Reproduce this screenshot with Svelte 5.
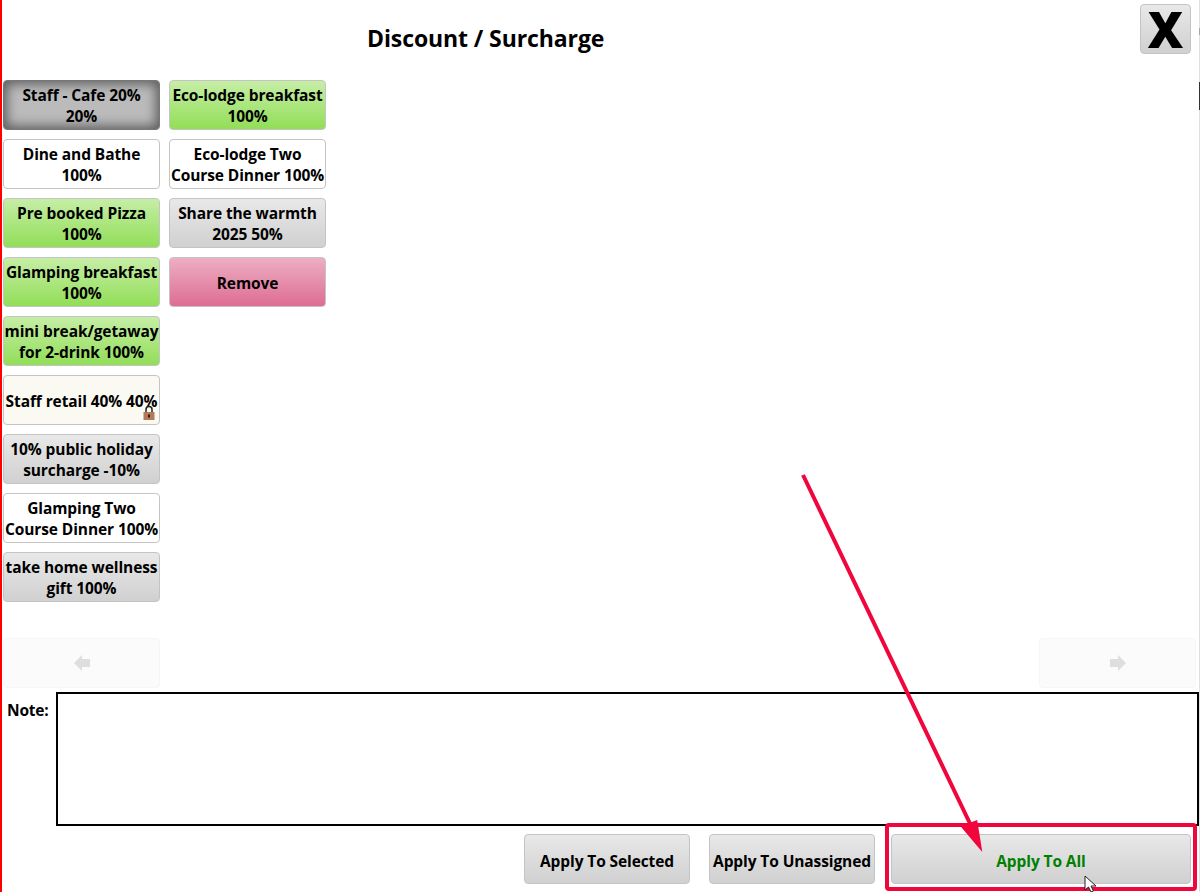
<script lang="ts">
	const discounts = [
		{ lines: ['Staff - Cafe 20%', '20%'], tone: 'active' },
		{ lines: ['Dine and Bathe', '100%'], tone: 'white' },
		{ lines: ['Pre booked Pizza', '100%'], tone: 'green' },
		{ lines: ['Glamping breakfast', '100%'], tone: 'green' },
		{ lines: ['mini break/getaway', 'for 2-drink 100%'], tone: 'green' },
		{ lines: ['Staff retail 40% 40%'], tone: 'cream one', locked: true },
		{ lines: ['10% public holiday', 'surcharge -10%'], tone: 'grey' },
		{ lines: ['Glamping Two', 'Course Dinner 100%'], tone: 'white' },
		{ lines: ['take home wellness', 'gift 100%'], tone: 'grey' },
		{ lines: ['Eco-lodge breakfast', '100%'], tone: 'green' },
		{ lines: ['Eco-lodge Two', 'Course Dinner 100%'], tone: 'white' },
		{ lines: ['Share the warmth', '2025 50%'], tone: 'grey' },
		{ lines: ['Remove'], tone: 'pink one' }
	];
</script>

<div class="page">
	<header>
		<h1>Discount / Surcharge</h1>
		<button class="btn grey close">X</button>
	</header>

	<div class="grid">
		{#each discounts as d}
			<button class="btn {d.tone}">
				{#each d.lines as line}
					<span class="line">{line}</span>
				{/each}
				{#if d.locked}
					<svg class="lock" width="12" height="15" viewBox="0 0 12 15">
						<path d="M3 8V4.500a3 3 0 0 1 6 0V8" fill="none" stroke="#222" stroke-width="1.500" />
						<rect x="0.500" y="7" width="11" height="8" fill="#b5795a" />
						<rect x="5" y="9.500" width="2" height="3" fill="#222" />
					</svg>
				{/if}
			</button>
		{/each}
	</div>

	<div class="pager">
		<div class="nav">
			<svg width="16" height="16" viewBox="0 0 16 16"><path d="M0 8 8 0v4h8v8H8v4z" fill="#dedede" /></svg>
		</div>
		<div class="nav">
			<svg width="16" height="16" viewBox="0 0 16 16"><path d="M16 8 8 0v4H0v8h8v4z" fill="#dedede" /></svg>
		</div>
	</div>

	<div class="note">
		<span>Note:</span>
		<div class="note-box"></div>
	</div>

	<footer>
		<button class="btn grey action">Apply To Selected</button>
		<button class="btn grey action">Apply To Unassigned</button>
		<button class="btn grey action all">Apply To All</button>
	</footer>

	<!-- annotation drawn over the screenshot -->
	<div class="highlight"></div>
	<svg class="arrow" width="1200" height="892" viewBox="0 0 1200 892">
		<line x1="803" y1="475" x2="975" y2="834" stroke="#f0063c" stroke-width="4" />
		<path d="M980 847 963 827 976 822 z" fill="#f0063c" stroke="#f0063c" stroke-width="3" />
	</svg>

	<svg class="cursor" width="14" height="18" viewBox="0 0 14 18">
		<path d="M1 1v14l3.500-3 2.500 5 2.500-1-2.500-5h5z" fill="#fff" stroke="#222" stroke-width="1" />
	</svg>

	<div class="edge"></div>
</div>

<style>
	:global(body) {
		margin: 0;
		background: #fff;
	}

	.page {
		position: relative;
		box-sizing: border-box;
		width: 1200px;
		height: 892px;
		overflow: hidden;
		display: flex;
		flex-direction: column;
		border-left: 2px solid #f00;
		font-family: 'Open Sans', 'Noto Sans', sans-serif;
		color: #000;
	}

	header {
		height: 78px;
		flex: none;
		display: flex;
		justify-content: space-between;
		align-items: flex-start;
		padding: 4px 9px 0 365px;
		box-sizing: border-box;
	}

	h1 {
		margin: 18px 0 0;
		font-size: 23px;
		line-height: 32px;
		font-weight: 700;
		letter-spacing: -0.1px;
	}

	.btn {
		box-sizing: border-box;
		position: relative;
		margin: 0;
		padding: 1px 0 0;
		border: 1px solid #c4c4c4;
		border-radius: 4px;
		font-family: inherit;
		font-size: 15.500px;
		font-weight: 700;
		line-height: 21px;
		letter-spacing: -0.1px;
		color: #000;
		text-align: center;
		white-space: nowrap;
		background: #fff;
	}

	.one {
		padding-top: 3px;
	}

	.line {
		display: block;
	}

	.grey {
		background: linear-gradient(#e8e8e8, #d0d0d0);
	}

	.white {
		background: #fff;
	}

	.green {
		background: linear-gradient(#c6eea6, #92de58);
	}

	.pink {
		background: linear-gradient(#edaec4, #de6d92);
	}

	.cream {
		background: #fafaf2;
	}

	.active {
		border-color: #777;
		background: #bbb;
		box-shadow: inset 0 0 12px 3px #5c5c5c;
	}

	.close {
		width: 51px;
		height: 50px;
		font-size: 49px;
		font-weight: 800;
		line-height: 46px;
		padding: 0;
		flex: none;
	}

	.grid {
		display: grid;
		grid-template-rows: repeat(9, 50px);
		grid-template-columns: repeat(2, 157px);
		grid-auto-flow: column;
		gap: 9px;
		padding-left: 1px;
		flex: none;
		margin-top: 2px;
		height: 522px;
	}

	.lock {
		position: absolute;
		right: 4px;
		bottom: 4px;
	}

	.pager {
		display: flex;
		justify-content: space-between;
		margin-top: 36px;
		padding: 0 4px 0 1px;
		flex: none;
	}

	.nav {
		box-sizing: border-box;
		width: 157px;
		height: 50px;
		border: 1px solid #f6f6f6;
		border-radius: 4px;
		background: #fbfbfb;
		display: flex;
		align-items: center;
		justify-content: center;
	}

	.note {
		display: flex;
		gap: 7px;
		margin-top: 4px;
		padding-left: 5px;
		flex: none;
	}

	.note span {
		width: 42px;
		font-size: 15.500px;
		font-weight: 700;
		line-height: 20px;
		margin-top: 8px;
		letter-spacing: -0.2px;
		white-space: nowrap;
	}

	.note-box {
		box-sizing: border-box;
		width: 1143px;
		height: 134px;
		border: 2px solid #000;
	}

	footer {
		display: flex;
		justify-content: flex-end;
		gap: 19px;
		margin-top: 8px;
		padding-right: 9px;
		flex: none;
	}

	.action {
		width: 166px;
		height: 50px;
		padding-top: 4px;
	}

	.all {
		width: 300px;
		margin-left: -3px;
		color: #008000;
	}

	.highlight {
		position: absolute;
		left: 883px;
		top: 823px;
		width: 312px;
		height: 68px;
		box-sizing: border-box;
		border: 4px solid #f0063c;
		border-radius: 4px;
	}

	.arrow {
		position: absolute;
		left: -2px;
		top: 0;
		pointer-events: none;
	}

	.cursor {
		position: absolute;
		left: 1082px;
		top: 875px;
	}

	/* strip of the window behind, showing at the right edge */
	.edge {
		position: absolute;
		right: 0;
		top: 0;
		width: 1px;
		height: 100%;
		background: linear-gradient(
			#e0e0e0 0 28px,
			#a8a8a8 28px 35px,
			#e0e0e0 35px 82px,
			#333 82px 110px,
			#e0e0e0 110px
		);
	}
</style>
